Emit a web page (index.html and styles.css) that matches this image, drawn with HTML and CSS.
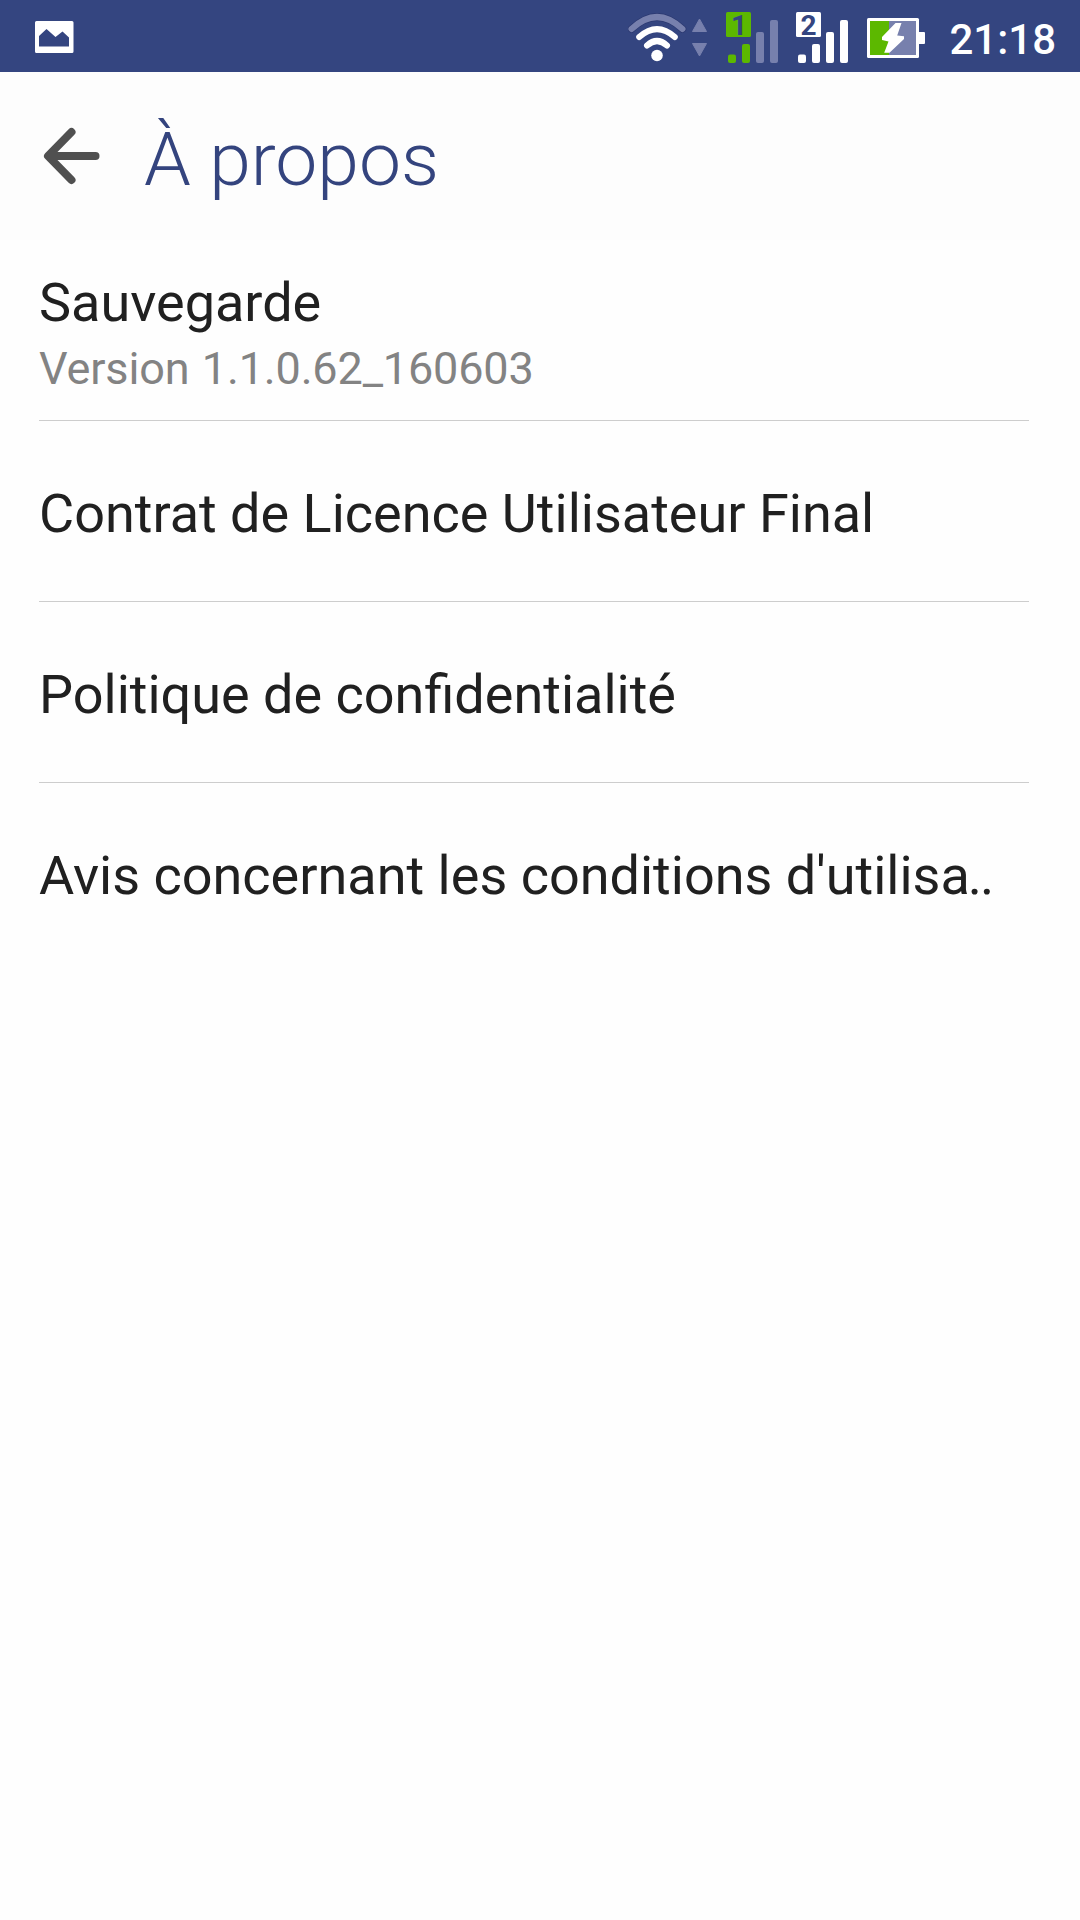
FILE: index.html
```html
<!DOCTYPE html>
<html lang="fr">
<head>
    <meta charset="UTF-8">
    <meta name="viewport" content="width=device-width, initial-scale=1.0">
    <title>À propos</title>
    <link rel="stylesheet" href="styles.css">
</head>
<body>

    <!-- Status bar -->
    <div class="status-bar">
        <svg class="icon-photo" width="40" height="72" viewBox="0 0 40 72">
            <path fill="#fff" fill-rule="evenodd" d="M1.500 21h35.500a1.500 1.500 0 0 1 1.500 1.500v29a1.500 1.500 0 0 1-1.500 1.500h-35.500a1.500 1.500 0 0 1-1.500-1.500v-29a1.500 1.500 0 0 1 1.500-1.500zM4 36v10.500h30v-9l-6.500-6-7 5.500-9-8z"/>
        </svg>

        <div class="status-icons">
            <!-- Wi-Fi and data arrows -->
            <svg width="80" height="72" viewBox="628 0 80 72">
                <g fill="none" stroke-linecap="round">
                    <path stroke="#2b3870" stroke-width="7.500" d="M631.500 29q25.500-24 51 0"/>
                    <path stroke="#7780ad" stroke-width="6" d="M631.500 29q25.500-24 51 0"/>
                    <path stroke="#fff" stroke-width="6" d="M639.200 37q17.800-15.800 35.600 0M647 45.500q10-9 20 0"/>
                </g>
                <circle cx="657" cy="55.500" r="5.800" fill="#fff"/>
                <path fill="#7780ad" stroke="#7780ad" stroke-width="1" stroke-linejoin="round" d="M699.500 19l7 12.500h-14zM699.500 56l7-12.500h-14z"/>
            </svg>

            <!-- SIM 1 -->
            <svg class="sim" width="54" height="72" viewBox="0 0 54 72">
                <rect x="0" y="12" width="25" height="25" rx="1.500" fill="#5cb800"/>
                <text class="sim-number" x="13" y="34.500" fill="#344580">1</text>
                <rect x="2" y="54.500" width="8" height="8.500" rx="2" fill="#5cb800"/>
                <rect x="16" y="44" width="8" height="19" rx="2" fill="#5cb800"/>
                <rect x="30" y="32" width="8" height="31" rx="2" fill="#7780ad"/>
                <rect x="44" y="20" width="8" height="43" rx="2" fill="#7780ad"/>
            </svg>

            <!-- SIM 2 -->
            <svg class="sim" width="54" height="72" viewBox="0 0 54 72">
                <rect x="0" y="12" width="25" height="25" rx="1.500" fill="#fff"/>
                <text class="sim-number" x="12.500" y="34.500" fill="#344580">2</text>
                <rect x="2" y="54.500" width="8" height="8.500" rx="2" fill="#fff"/>
                <rect x="16" y="44" width="8" height="19" rx="2" fill="#fff"/>
                <rect x="30" y="32" width="8" height="31" rx="2" fill="#fff"/>
                <rect x="44" y="20" width="8" height="43" rx="2" fill="#fff"/>
            </svg>

            <!-- Battery, charging -->
            <svg class="battery" width="58" height="72" viewBox="867 0 58 72">
                <rect x="867" y="18" width="52" height="40" rx="1.500" fill="#fff"/>
                <rect x="918" y="32" width="7" height="12" rx="1" fill="#fff"/>
                <rect x="870" y="21" width="46" height="34" fill="#7780ad"/>
                <rect x="870" y="21" width="19" height="34" fill="#5cb800"/>
                <path fill="#fff" d="M895.500 23h6l-4.300 12.500 6.800.8v2.700l-14.500 13.800h-5.300l4.300-11.300-6.500-1.500v-3z"/>
            </svg>
        </div>

        <span class="clock">21:18</span>
    </div>

    <!-- Title bar -->
    <div class="header">
        <svg class="back" width="58" height="58" viewBox="0 0 58 58">
            <path fill="none" stroke="#505050" stroke-width="8" stroke-linecap="round" stroke-linejoin="round" d="M29.500 5L6 29l23.500 24M7 29h46.500"/>
        </svg>
        <h1 class="title">À propos</h1>
    </div>

    <ul class="list">
        <li class="item item-version">
            <div class="label">Sauvegarde</div>
            <div class="version">Version 1.1.0.62_160603</div>
        </li>
        <li class="item">
            <div class="label">Contrat de Licence Utilisateur Final</div>
        </li>
        <li class="item">
            <div class="label">Politique de confidentialité</div>
        </li>
        <li class="item">
            <div class="label">Avis concernant les conditions d'utilis<span class="dots">a..</span></div>
        </li>
    </ul>

</body>
</html>
```

FILE: styles.css
```css
/* General Styling */
* {
    box-sizing: border-box;
    margin: 0;
    padding: 0;
}

body {
    font-family: Roboto, "Noto Sans", sans-serif;
    background: #fefefe;
    color: #202020;
    min-height: 100vh;
}

svg {
    display: block;
    flex: none;
}

/* Status bar */
.status-bar {
    display: flex;
    height: 72px;
    padding: 0 24px 0 35px;
    background: #344580;
    color: #fff;
}

.status-icons {
    display: flex;
    margin-left: auto;
}

.sim {
    margin-left: 18px;
}

.sim + .sim {
    margin-left: 16px;
}

.sim-number {
    font-size: 28px;
    font-weight: bold;
    text-anchor: middle;
}

.battery {
    margin-left: 17px;
}

.clock {
    margin-left: 24px;
    font-size: 42px;
    font-weight: 500;
    line-height: 79px;
}

/* Title bar */
.header {
    display: flex;
    height: 168px;
    padding: 43px 42px 0;
    background: #fdfdfd;
}

.back {
    margin: 12px 44px 0 0;
}

.title {
    color: #34447e;
    font-size: 75px;
    font-weight: 300;
    line-height: 88px;
}

/* List */
.list {
    padding: 0 51px 0 39px;
    list-style: none;
}

.item {
    height: 181px;
    padding-top: 61px;
    border-bottom: 1px solid #cdcdcd;
}

.item:last-child {
    border-bottom: none;
}

.item-version {
    padding-top: 31px;
}

.label {
    font-size: 54px;
    line-height: 64px;
    white-space: nowrap;
}

.dots {
    letter-spacing: -2px;
}

.version {
    margin-top: 7px;
    color: #838383;
    font-size: 45px;
    line-height: 54px;
    letter-spacing: -0.16px;
    word-spacing: 1.5px;
}
```
